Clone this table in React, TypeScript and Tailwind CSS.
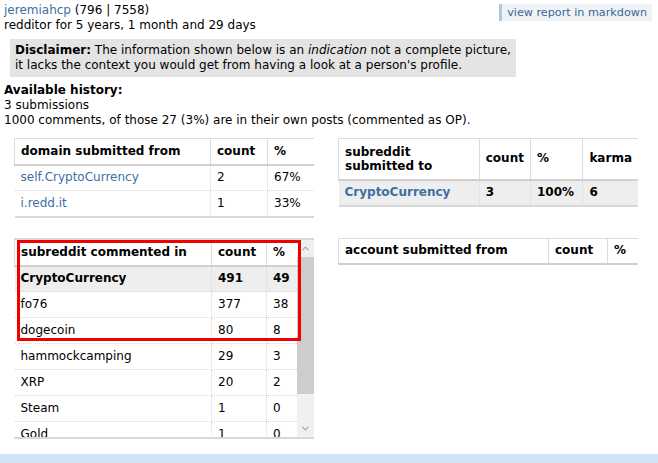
import { ChevronDown, ChevronUp } from "lucide-react";

const font = { fontFamily: '"DejaVu Sans", Verdana, sans-serif' };

const th = "h-[26px] border border-[#dcdcdc] border-b-2 border-b-[#d0d0d0] px-[6px] text-left align-middle font-bold";
const td = "h-[26px] border-b border-r border-dotted border-[#d8d8d8] px-[6px] align-middle last:border-r-0";

const comments = [
  ["CryptoCurrency", "491", "49", true],
  ["fo76", "377", "38", false],
  ["dogecoin", "80", "8", false],
  ["hammockcamping", "29", "3", false],
  ["XRP", "20", "2", false],
  ["Steam", "1", "0", false],
  ["Gold", "1", "0", false],
  ["Fallout", "1", "0", false],
] as const;

export default function App() {
  return (
    <div style={font} className="relative h-[463px] overflow-hidden bg-white text-[12px] leading-[15px] text-black">
      <div className="px-[4px] pt-[3px]">
        <div className="flex items-start justify-between">
          <div>
            <div>
              <a className="text-[#3d6fa3]">jeremiahcp</a> (796 | 7558)
            </div>
            <div>redditor for 5 years, 1 month and 29 days</div>
          </div>
          <a className="mr-[2px] mt-[1px] border-l-[3px] border-[#b4c6da] bg-[#eef3f8] px-[5px] py-[1px] text-[11.2px] text-[#3d6591]">view report in markdown</a>
        </div>
        <div className="ml-[6px] mt-[6px] w-fit bg-[#e4e4e4] px-[5px] py-[4px]">
          <b>Disclaimer:</b> The information shown below is an <i>indication</i> not a complete picture,
          <br />
          it lacks the context you would get from having a look at a person's profile.
        </div>
        <div className="mt-[6px] font-bold">Available history:</div>
        <div>3 submissions</div>
        <div>1000 comments, of those 27 (3%) are in their own posts (commented as OP).</div>

        <div className="ml-[10px] mt-[10px] grid grid-cols-[300px_300px] items-start gap-x-[24px] gap-y-[20px]">
          <table className="w-[300px] border-collapse border-b-2 border-[#d8d8d8]">
            <thead>
              <tr>
                <th className={`${th} w-[196px]`}>domain submitted from</th>
                <th className={`${th} w-[57px]`}>count</th>
                <th className={`${th} border-r-0`}>%</th>
              </tr>
            </thead>
            <tbody>
              <tr>
                <td className={`${td} text-[#3d6fa3]`}>self.CryptoCurrency</td>
                <td className={td}>2</td>
                <td className={td}>67%</td>
              </tr>
              <tr>
                <td className={`${td} text-[#3d6fa3]`}>i.redd.it</td>
                <td className={td}>1</td>
                <td className={td}>33%</td>
              </tr>
            </tbody>
          </table>

          <table className="w-[300px] border-collapse border-b-2 border-[#d8d8d8]">
            <thead>
              <tr>
                <th className={`${th} h-[41px] w-[146px] leading-[14px]`}>
                  subreddit
                  <br />
                  submitted to
                </th>
                <th className={`${th} w-[49px]`}>count</th>
                <th className={`${th} w-[53px]`}>%</th>
                <th className={`${th} border-r-0`}>karma</th>
              </tr>
            </thead>
            <tbody>
              <tr className="bg-[#eeeeee] font-bold">
                <td className={`${td} text-[#3d6fa3]`}>CryptoCurrency</td>
                <td className={td}>3</td>
                <td className={td}>100%</td>
                <td className={td}>6</td>
              </tr>
            </tbody>
          </table>

          <div className="flex h-[201px] w-[300px] border-y-2 border-[#d8d8d8]">
            <div className="h-full flex-1 overflow-hidden">
              <table className="w-full border-collapse">
                <thead>
                  <tr>
                    <th className={`${th} w-[197px] border-t-0`}>subreddit commented in</th>
                    <th className={`${th} w-[55px] border-t-0`}>count</th>
                    <th className={`${th} border-r-0 border-t-0`}>%</th>
                  </tr>
                </thead>
                <tbody>
                  {comments.map(([name, count, pct, hot]) => (
                    <tr key={name} className={hot ? "bg-[#eeeeee] font-bold" : ""}>
                      <td className={td}>{name}</td>
                      <td className={td}>{count}</td>
                      <td className={td}>{pct}</td>
                    </tr>
                  ))}
                </tbody>
              </table>
            </div>
            <div className="flex h-full w-[17px] flex-col bg-[#f0f0f0]">
              <div className="flex h-[17px] items-center justify-center text-[#a3a3a3]">
                <ChevronUp size={11} strokeWidth={2.5} />
              </div>
              <div className="mx-0 h-[137px] bg-[#cdcdcd]" />
              <div className="flex-1" />
              <div className="flex h-[17px] items-center justify-center text-[#a3a3a3]">
                <ChevronDown size={11} strokeWidth={2.5} />
              </div>
            </div>
          </div>

          <table className="w-[300px] border-collapse border-b-2 border-[#d8d8d8]">
            <thead>
              <tr>
                <th className={`${th} w-[210px] border-b-0`}>account submitted from</th>
                <th className={`${th} w-[59px] border-b-0`}>count</th>
                <th className={`${th} border-b-0 border-r-0`}>%</th>
              </tr>
            </thead>
          </table>
        </div>
      </div>

      <div className="absolute left-[17px] top-[240px] h-[101px] w-[284px] border-[3px] border-[#f00000]" />
      <div className="absolute bottom-0 left-0 h-[9px] w-full bg-[#cfe2f6]" />
    </div>
  );
}
